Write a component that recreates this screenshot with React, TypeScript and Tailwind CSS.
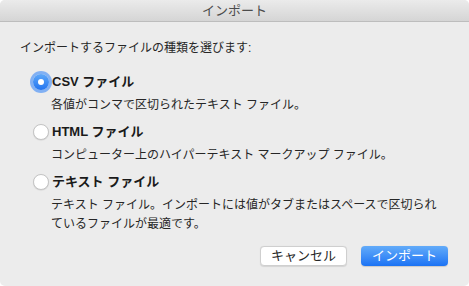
import React, { useState } from 'react';

type Option = {
  id: string;
  label: string;
  description: React.ReactNode;
};

const options: Option[] = [
  { id: 'csv', label: 'CSV ファイル', description: '各値がコンマで区切られたテキスト ファイル。' },
  { id: 'html', label: 'HTML ファイル', description: 'コンピューター上のハイパーテキスト マークアップ ファイル。' },
  {
    id: 'text',
    label: 'テキスト ファイル',
    description: (
      <>
        テキスト ファイル。インポートには値がタブまたはスペースで区切られ
        <br />
        ているファイルが最適です。
      </>
    ),
  },
];

const font = { fontFamily: '"Liberation Sans", "Noto Sans CJK JP", sans-serif' };

const Radio: React.FC<{ checked: boolean }> = ({ checked }) =>
  checked ? (
    <span className="flex h-[16px] w-[16px] items-center justify-center rounded-full bg-gradient-to-b from-[#5ea8f9] to-[#2274ef] shadow-[0_0_0_3px_rgba(94,156,245,0.75)]">
      <span className="h-[6px] w-[6px] rounded-full bg-white" />
    </span>
  ) : (
    <span className="h-[16px] w-[16px] rounded-full border border-[#c4c4c4] bg-white shadow-[0_0.5px_1px_rgba(0,0,0,0.12)]" />
  );

export default function App() {
  const [selected, setSelected] = useState('csv');

  return (
    <div className="h-[286px] w-[469px] bg-white" style={font}>
      <div className="flex h-full w-full flex-col overflow-hidden rounded-[5px] bg-[#ececec]">
        <div className="flex h-[22px] shrink-0 items-center justify-center border-b border-[#bdbdbd] bg-gradient-to-b from-[#ebebeb] to-[#d5d5d5] text-[13px] text-[#4c4c4c]">
          インポート
        </div>

        <div className="flex flex-1 flex-col px-[20px]">
          <div className="mt-[17px] h-[18px] text-[12px] leading-[18px] text-[#262626]">
            インポートするファイルの種類を選びます:
          </div>

          <div className="mt-[15px] flex flex-col">
            {options.map((opt, i) => (
              <div key={opt.id} className={i === 0 ? '' : 'mt-[7px]'}>
                <button
                  onClick={() => setSelected(opt.id)}
                  className="flex h-[20px] items-center gap-[3px] pl-[13px]"
                >
                  <Radio checked={selected === opt.id} />
                  <span className="text-[13px] font-bold text-[#1a1a1a]">{opt.label}</span>
                </button>
                <div className="mt-[4px] pl-[31px] text-[12px] leading-[19px] text-[#262626]">
                  {opt.description}
                </div>
              </div>
            ))}
          </div>

          <div className="mt-auto mb-[20px] mr-[1px] flex justify-end gap-[14px]">
            <button className="flex h-[20px] w-[87px] items-center justify-center rounded-[4px] border border-[#cfcfcf] bg-white text-[13px] text-[#262626] shadow-[0_0.5px_1px_rgba(0,0,0,0.1)]">
              キャンセル
            </button>
            <button className="flex h-[20px] w-[87px] items-center justify-center rounded-[4px] bg-gradient-to-b from-[#62abf9] to-[#1a72f4] text-[13px] text-white shadow-[0_0.5px_1px_rgba(0,0,0,0.15)]">
              インポート
            </button>
          </div>
        </div>
      </div>
    </div>
  );
}
